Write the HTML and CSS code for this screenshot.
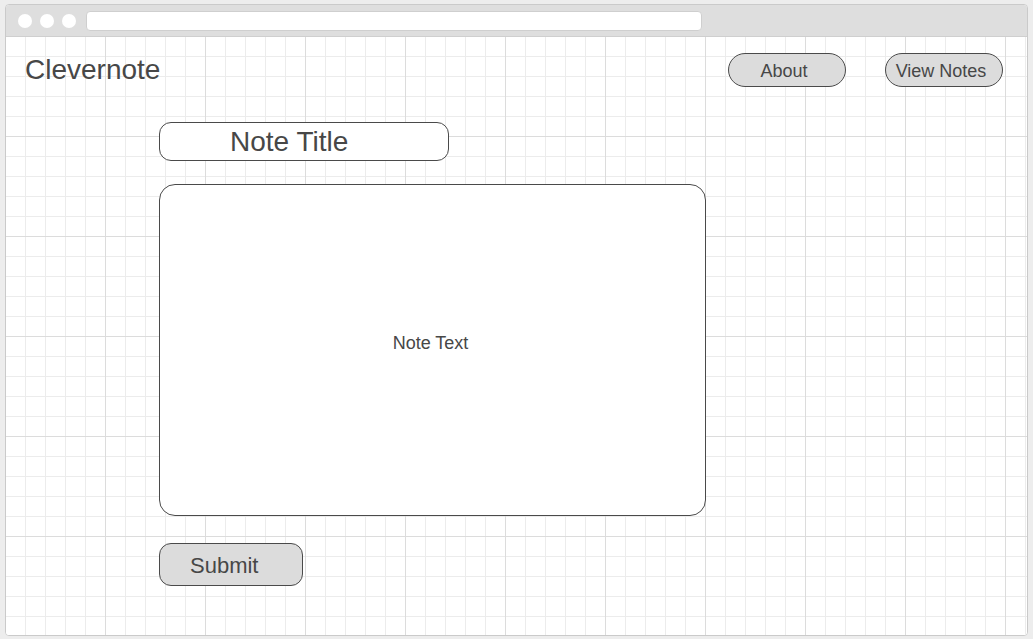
FILE: index.html
```html
<!DOCTYPE html>
<html>
<head>
<meta charset="utf-8">
<title>Clevernote</title>
<link rel="stylesheet" href="styles.css">
</head>
<body>
<div class="window">
  <div class="titlebar">
    <span class="dot"></span>
    <span class="dot"></span>
    <span class="dot"></span>
    <span class="address"></span>
  </div>
  <div class="content">
    <header class="header">
      <div class="logo">Clevernote</div>
      <nav class="nav">
        <div class="btn">About</div>
        <div class="btn">View Notes</div>
      </nav>
    </header>
    <main class="form">
      <div class="title-field">Note Title</div>
      <div class="text-field">Note Text</div>
      <div class="submit">Submit</div>
    </main>
  </div>
</div>
</body>
</html>
```

FILE: styles.css
```css
* { box-sizing: border-box; }

html, body {
  margin: 0;
  padding: 0;
  background: #ededed;
  font-family: "Liberation Sans", Arial, sans-serif;
  color: #474747;
}

.window {
  margin: 4px 0 0 5px;
  width: 1023px;
  height: 632px;
  border: 1px solid #cacaca;
  border-radius: 4px;
  overflow: hidden;
  display: flex;
  flex-direction: column;
  background: #fff;
}

.titlebar {
  height: 32px;
  flex: none;
  background: #dedede;
  border-bottom: 1px solid #cfcfcf;
  display: flex;
  align-items: center;
  padding-left: 12px;
}

.dot {
  width: 14px;
  height: 14px;
  border-radius: 50%;
  background: #fff;
  margin-right: 8px;
}

.address {
  margin-left: 2px;
  width: 616px;
  height: 20px;
  background: #fff;
  border: 1px solid #cfcfcf;
  border-radius: 4px;
}

.content {
  flex: 1;
  background-color: #fff;
  background-image:
    linear-gradient(to right, #dcdcdc 1px, transparent 1px),
    linear-gradient(to bottom, #dcdcdc 1px, transparent 1px),
    linear-gradient(to right, #ececec 1px, transparent 1px),
    linear-gradient(to bottom, #ececec 1px, transparent 1px);
  background-size: 100px 100px, 100px 100px, 20px 20px, 20px 20px;
  background-position: 99px 99px, 99px 99px, 19px 19px, 19px 19px;
}

.header {
  display: flex;
  justify-content: space-between;
  align-items: flex-start;
  padding: 16px 24px 0 19px;
}

.logo {
  font-size: 28px;
  line-height: 34px;
}

.nav {
  display: flex;
  gap: 39px;
}

.btn {
  width: 118px;
  height: 34px;
  border: 1px solid #4a4a4a;
  border-radius: 17px;
  background: #dcdcdc;
  font-size: 18px;
  line-height: 34px;
  text-align: center;
  padding-right: 6px;
}

.form {
  padding: 35px 0 0 153px;
  display: flex;
  flex-direction: column;
  align-items: flex-start;
}

.title-field {
  width: 290px;
  height: 39px;
  border: 1px solid #4a4a4a;
  border-radius: 12px;
  background: #fff;
  font-size: 28px;
  line-height: 37px;
  padding-left: 70px;
}

.text-field {
  margin-top: 23px;
  width: 547px;
  height: 332px;
  border: 1px solid #4a4a4a;
  border-radius: 16px;
  background: #fff;
  font-size: 18px;
  display: flex;
  align-items: center;
  justify-content: center;
  padding-bottom: 14px;
  padding-right: 4px;
}

.submit {
  margin-top: 27px;
  width: 144px;
  height: 43px;
  border: 1px solid #4a4a4a;
  border-radius: 12px;
  background: #dcdcdc;
  font-size: 22px;
  line-height: 43px;
  padding-left: 30px;
}
```
